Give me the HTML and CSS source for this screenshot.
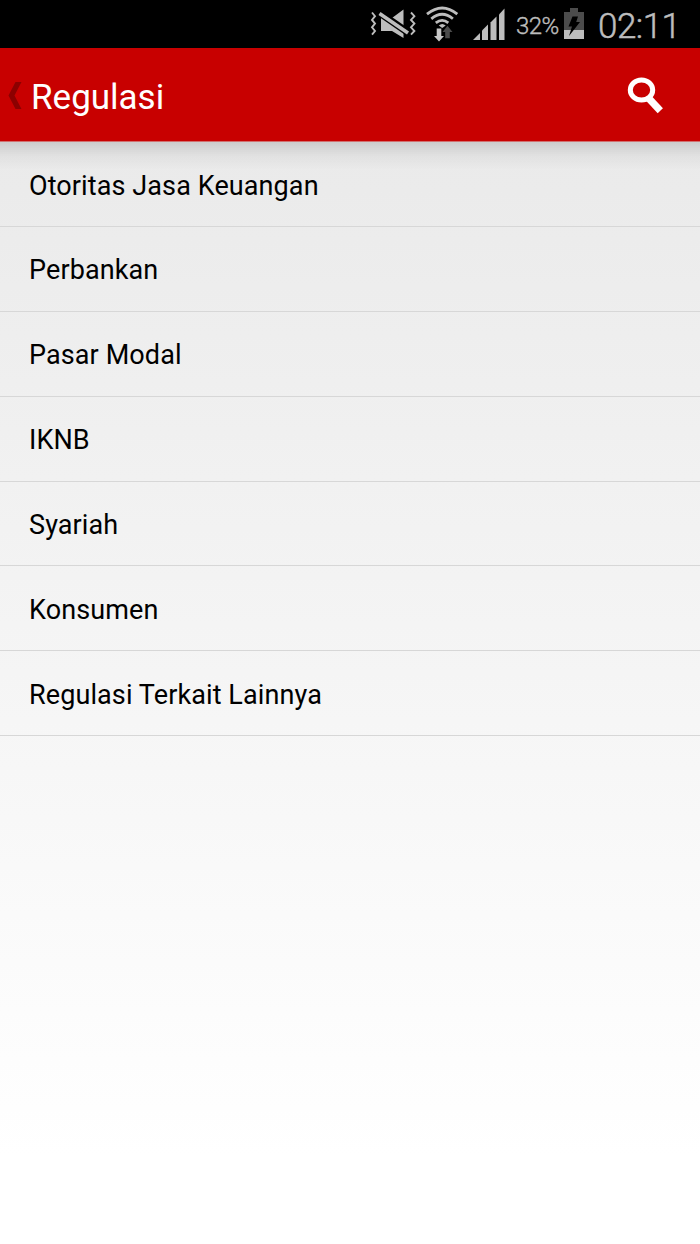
FILE: index.html
```html
<!DOCTYPE html>
<html lang="id">
  <head>
    <meta charset="UTF-8" />
    <meta name="viewport" content="width=device-width, initial-scale=1.0" />
    <title>Regulasi</title>
    <link rel="stylesheet" href="styles.css">
  </head>

  <body>
    <!-- Status bar -->
    <div class="status">
      <svg class="mute" width="48" height="48" viewBox="0 0 48 48">
        <g fill="none" stroke="#bdbdbd" stroke-width="1.9">
          <path d="M2 12.5l3 3.7-3 3.7 3 3.7-3 3.7 3 3.7-3 3.6" />
          <path d="M41 12.5l3.4 3.7-3.4 3.7 3.4 3.7-3.4 3.7 3.4 3.7-3.4 3.6" />
        </g>
        <path d="M11 18h11L33.5 9.500v28.500L22 31H11z" fill="#bdbdbd" />
        <path d="M10.500 13.500L38 32.500" stroke="#000" stroke-width="7" />
        <path d="M9.500 13.500L38 33" stroke="#bdbdbd" stroke-width="3.600" />
      </svg>
      <svg class="wifi" width="36" height="48" viewBox="0 0 36 48">
        <g fill="none" stroke="#bdbdbd" stroke-width="2.800">
          <path d="M3 14.200Q18.200 1.800 33.300 14.200" />
          <path d="M7.300 18.800Q18.200 9.800 28.900 18.800" />
          <path d="M11.800 22.800Q18.200 17.900 24.300 22.800" />
        </g>
        <path d="M14.800 25.500Q18.200 22.500 21.700 25.500L18.200 28z" fill="#bdbdbd" />
        <path d="M12.700 28.500h4.600v7.500h2.700l-5 5.500-5-5.500h2.700z" fill="#c8c8c8" />
        <path d="M21.200 38.300v-6.300h-2.700l5-6.300 5 6.300h-2.700v6.300z" fill="#4c4c4c" />
      </svg>
      <svg class="signal" width="34" height="48" viewBox="0 0 34 48">
        <g fill="#bdbdbd">
          <path d="M1 40l7-7v7z" />
          <path d="M10 40v-9.500l6-6V40z" />
          <path d="M18.500 40V22.500l6-6V40z" />
          <path d="M27 40V14.500L32.500 8.500V40z" />
        </g>
      </svg>
      <span class="percent">32%</span>
      <svg class="battery" width="20" height="48" viewBox="0 0 20 48">
        <path d="M0 12h6V8h8v4h6v18H0z" fill="#4c4c4c" />
        <path d="M0 30h20v9H0z" fill="#bdbdbd" />
        <path d="M8.500 16.500h5.500L12.200 22h3.800L5 36l3-9.500H4.500z" fill="#000" />
      </svg>
      <span class="clock">02:11</span>
    </div>

    <!-- Header -->
    <div class="header">
      <svg class="back" width="14" height="28" viewBox="0 0 14 28">
        <path d="M7.500 0H13.500L6.500 13.500 13.500 27H7.500L.500 13.500z" fill="#8c0000" />
      </svg>
      <h1 class="title">Regulasi</h1>
      <svg class="search" width="40" height="40" viewBox="0 0 40 40">
        <ellipse cx="15.500" cy="15" rx="11.200" ry="10" fill="none" stroke="#fff" stroke-width="5" />
        <path d="M22 22.500L34.300 35.800" stroke="#fff" stroke-width="7.200" />
      </svg>
    </div>

    <!-- Menu -->
    <div class="content">
      <ul class="menu">
        <li>Otoritas Jasa Keuangan</li>
        <li>Perbankan</li>
        <li>Pasar Modal</li>
        <li>IKNB</li>
        <li>Syariah</li>
        <li>Konsumen</li>
        <li>Regulasi Terkait Lainnya</li>
      </ul>
    </div>
  </body>
</html>
```
FILE: styles.css
```css
body {
  margin: 0;
  height: 1244px;
  display: flex;
  flex-direction: column;
  overflow: hidden;
  font-family: Roboto, sans-serif;
}
.status {
  display: flex;
  align-items: center;
  height: 48px;
  box-sizing: border-box;
  padding-left: 370px;
  background-color: #000;
  color: #bdbdbd;
  white-space: nowrap;
}
.status svg {
  flex: none;
}
.wifi {
  margin-left: 6px;
}
.signal {
  margin-left: 12px;
}
.percent {
  width: 48px;
  margin-left: 10px;
  box-sizing: border-box;
  font-size: 24px;
  font-weight: 300;
  -webkit-text-stroke: 0.4px #bdbdbd;
  line-height: 28px;
  letter-spacing: -0.6px;
  padding-top: 3px;
}
.clock {
  margin-left: 14px;
  font-size: 35px;
  font-weight: 300;
  -webkit-text-stroke: 0.5px #bdbdbd;
  line-height: 40px;
  letter-spacing: -0.5px;
  padding-top: 5px;
}
.header {
  display: flex;
  align-items: center;
  height: 94px;
  box-sizing: border-box;
  padding: 0 34px 0 8px;
  background-color: #c80000;
  border-bottom: 1px solid #d07070;
}
.back {
  margin-top: 2px;
}
.title {
  flex: 1;
  margin: 7px 0 0 9px;
  color: #fff;
  font-size: 35px;
  font-weight: 400;
  line-height: 44px;
}
.content {
  flex: 1;
  background: linear-gradient(rgba(0, 0, 0, 0.13), rgba(0, 0, 0, 0.04) 14px, rgba(0, 0, 0, 0) 28px),
    linear-gradient(#eaeaea, #fff 92%);
}
.menu {
  list-style: none;
  margin: 0;
  padding: 0;
}
.menu li {
  height: 84.9px;
  box-sizing: border-box;
  padding: 1.5px 29px 0;
  border-bottom: 1px solid #d7d7d7;
  color: #000;
  font-size: 27px;
  letter-spacing: 0.1px;
  line-height: 84px;
}
```
